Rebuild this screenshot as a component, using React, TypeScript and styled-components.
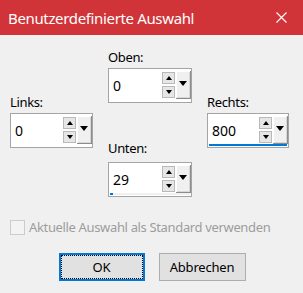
import styled, { createGlobalStyle } from 'styled-components'

const colors = {
  face: '#f0f0f0',
  title: '#d13438',
  border: '#a5a5a5',
  accent: '#0078d7',
  button: '#e1e1e1',
  disabled: '#9d9d9d',
}

const GlobalStyle = createGlobalStyle`
  html, body {
    margin: 0;
    padding: 0;
    background: ${colors.face};
  }
  body {
    font-family: 'Noto Sans', 'Open Sans', sans-serif;
    font-size: 13px;
    letter-spacing: -0.35px;
    color: #000;
  }
`

const Window = styled.div`
  width: 303px;
  height: 293px;
  background: ${colors.face};
  display: flex;
  flex-direction: column;
  overflow: hidden;
`

const TitleBar = styled.div`
  height: 35px;
  flex: none;
  background: ${colors.title};
  color: #fff;
  display: flex;
  align-items: center;
  justify-content: space-between;
  padding: 0 16px 0 8px;
`

const TitleText = styled.span`
  font-size: 15px;
  letter-spacing: -0.35px;
`

const CloseIcon = () => (
  <svg width="11" height="11" viewBox="0 0 11 11">
    <path d="M0.5 0.5 L10.5 10.5 M10.5 0.5 L0.5 10.5" stroke="#fff" strokeWidth="1.1" />
  </svg>
)

const Fields = styled.div`
  display: flex;
  padding: 13px 0 0 10px;
  gap: 15px;
`

const Column = styled.div<{ offset: number; width: number }>`
  display: flex;
  flex-direction: column;
  width: ${({ width }) => width}px;
  margin-top: ${({ offset }) => offset}px;
`

const Label = styled.div<{ spacing?: number; lead?: number }>`
  line-height: 18px;
  margin-top: ${({ lead }) => lead ?? 0}px;
  margin-bottom: ${({ spacing }) => spacing ?? 2}px;
`

const Box = styled.div`
  height: 35px;
  box-sizing: border-box;
  border: 1px solid ${colors.border};
  background: #fff;
  display: flex;
  flex-direction: column;
`

const BoxRow = styled.div`
  flex: 1;
  display: flex;
  align-items: flex-start;
  padding-left: 4px;
`

const Value = styled.span`
  flex: 1;
  font-size: 14px;
  line-height: 16px;
  letter-spacing: 0;
  margin-top: 9px;
`

const Spinners = styled.div`
  display: flex;
  flex-direction: column;
  gap: 2px;
  margin-top: 3px;
  margin-right: 1px;
`

const SpinButton = styled.div<{ down?: boolean }>`
  width: 13px;
  height: 12px;
  box-sizing: border-box;
  border: 1px solid #b9b9b9;
  background: #e6e6e6;
  display: flex;
  align-items: center;
  justify-content: center;

  &::after {
    content: '';
    border-left: 3px solid transparent;
    border-right: 3px solid transparent;
    ${({ down }) => (down ? 'border-top: 4px solid #000;' : 'border-bottom: 4px solid #000;')}
  }
`

const DropButton = styled.div`
  width: 15px;
  height: 28px;
  margin-top: 2px;
  box-sizing: border-box;
  background: #f0f0f0;
  border-right: 1px solid #8c8c8c;
  border-bottom: 1px solid #8c8c8c;
  box-shadow: inset 1px 1px 0 #fff, inset -1px -1px 0 #d8d8d8;
  display: flex;
  justify-content: center;
  padding-top: 10px;

  &::after {
    content: '';
    height: 0;
    border-left: 4px solid transparent;
    border-right: 4px solid transparent;
    border-top: 5px solid #000;
  }
`

const Track = styled.div<{ filled: boolean }>`
  height: 3px;
  margin: 0 1px 1px 1px;
  background: ${({ filled }) => (filled ? '#f0f0f0' : 'transparent')};
`

const Fill = styled.div`
  height: 100%;
  background: ${colors.accent};
`

const CheckRow = styled.div`
  display: flex;
  align-items: center;
  gap: 4px;
  margin: 21px 0 0 10px;
  color: ${colors.disabled};
`

const CheckBox = styled.div`
  width: 15px;
  height: 15px;
  box-sizing: border-box;
  border: 1px solid #cccccc;
  background: #f3f3f3;
`

const Buttons = styled.div`
  display: flex;
  justify-content: center;
  gap: 14px;
  margin-top: 17px;
  padding-left: 1px;
`

const Button = styled.button<{ primary?: boolean }>`
  width: ${({ primary }) => (primary ? 86 : 87)}px;
  height: 28px;
  box-sizing: border-box;
  background: ${colors.button};
  border: ${({ primary }) => (primary ? `2px solid ${colors.accent}` : '1px solid #adadad')};
  font-family: inherit;
  font-size: 13px;
  letter-spacing: -0.2px;
  color: #000;
  padding: 0;
  ${({ primary }) => (primary ? 'outline: 1px dotted #000; outline-offset: -3px;' : '')}
`

interface SpinFieldProps {
  value: number
  max: number
}

const SpinField = ({ value, max }: SpinFieldProps) => (
  <Box>
    <BoxRow>
      <Value>{value}</Value>
      <Spinners>
        <SpinButton />
        <SpinButton down />
      </Spinners>
      <DropButton />
    </BoxRow>
    <Track filled={value > 0}>
      <Fill style={{ width: `${(value / max) * 100}%` }} />
    </Track>
  </Box>
)

const App = () => (
  <Window>
    <GlobalStyle />
    <TitleBar>
      <TitleText>{'Benutzerdefinierte Auswahl'}</TitleText>
      <CloseIcon />
    </TitleBar>
    <Fields>
      <Column width={83} offset={45}>
        <Label>{'Links:'}</Label>
        <SpinField value={0} max={800} />
      </Column>
      <Column width={84} offset={0}>
        <Label>{'Oben:'}</Label>
        <SpinField value={0} max={800} />
        <Label lead={36} spacing={5}>{'Unten:'}</Label>
        <SpinField value={29} max={800} />
      </Column>
      <Column width={82} offset={45}>
        <Label>{'Rechts:'}</Label>
        <SpinField value={800} max={800} />
      </Column>
    </Fields>
    <CheckRow>
      <CheckBox />
      <span>{'Aktuelle Auswahl als Standard verwenden'}</span>
    </CheckRow>
    <Buttons>
      <Button primary>{'OK'}</Button>
      <Button>{'Abbrechen'}</Button>
    </Buttons>
  </Window>
)

export default App
